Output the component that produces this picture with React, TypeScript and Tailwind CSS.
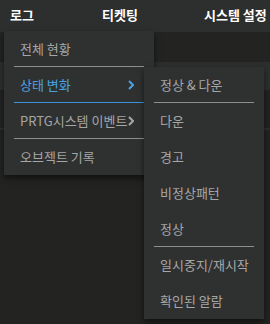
import React from "react";

const font = { fontFamily: '"Noto Sans CJK KR", "Noto Sans", sans-serif' };

function Chevron({ color }: { color: string }) {
  return (
    <svg width="6" height="10" viewBox="0 0 6 10" className="shrink-0">
      <polyline points="1,1 5,5 1,9" fill="none" stroke={color} strokeWidth="2" />
    </svg>
  );
}

function Item({
  label,
  divider,
  active,
  chevron,
}: {
  label: string;
  divider?: "gray" | "blue";
  active?: boolean;
  chevron?: boolean;
}) {
  return (
    <div className="relative h-[36px]">
      <div
        className={`flex items-center justify-between h-[35px] pl-[16px] pr-[20px] text-[13px] ${
          active ? "text-[#4aa2e0]" : "text-[#a6a6a6]"
        }`}
      >
        <span className="whitespace-nowrap">{label}</span>
        {chevron && <Chevron color={active ? "#4aa2e0" : "#a6a6a6"} />}
      </div>
      {divider && (
        <div
          className={`mx-[10px] h-px ${divider === "blue" ? "bg-[#3f93d6]" : "bg-[#8e8e8e]"}`}
        />
      )}
    </div>
  );
}

export default function App() {
  return (
    <div className="relative w-[270px] h-[324px] bg-[#232322] overflow-hidden" style={font}>
      <div className="h-[32px] pb-[3px] bg-[#2d2f2f] flex items-center text-white font-bold text-[13px]">
        <span className="w-[102px] pl-[10px]">로그</span>
        <span className="w-[102px]">티켓팅</span>
        <span>시스템 설정</span>
      </div>
      <div className="h-[30px]" />
      <div className="h-[28px] bg-[#2d2f2f]" />
      <div className="h-[38px]" />
      <div className="h-[2px] bg-[#2d2f2f]" />

      <div className="absolute left-[4px] top-[31px] w-[150px] bg-[#2f3131] shadow-[0_3px_6px_rgba(0,0,0,0.55)]">
        <Item label="전체 현황" divider="gray" />
        <Item label="상태 변화" divider="blue" active chevron />
        <Item label="PRTG시스템 이벤트" divider="gray" chevron />
        <Item label="오브젝트 기록" />
      </div>

      <div className="absolute left-[144px] top-[67px] w-[120px] bg-[#2f3131] shadow-[0_3px_6px_rgba(0,0,0,0.55)]">
        <Item label="정상 & 다운" divider="gray" />
        <Item label="다운" />
        <Item label="경고" />
        <Item label="비정상패턴" />
        <Item label="정상" divider="gray" />
        <Item label="일시중지/재시작" />
        <Item label="확인된 알람" />
      </div>
    </div>
  );
}
